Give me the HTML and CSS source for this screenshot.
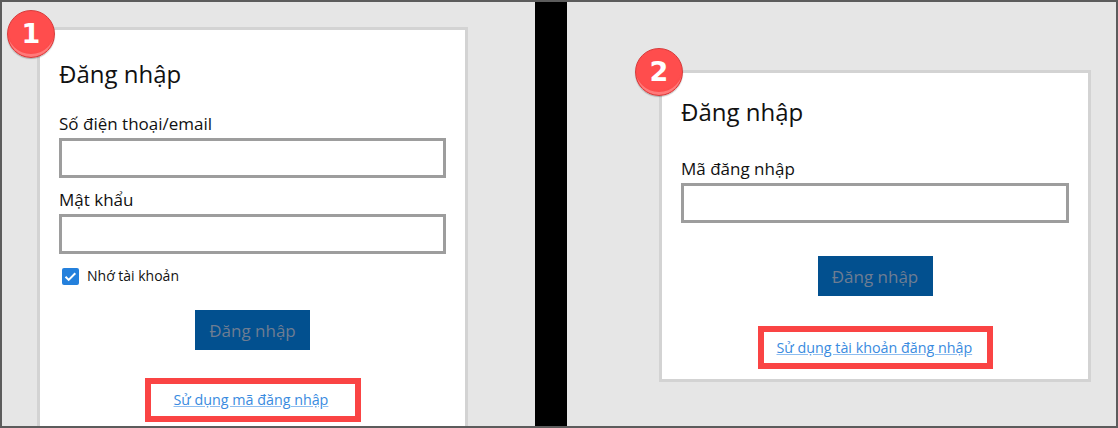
FILE: index.html
```html
<!DOCTYPE html>
<html lang="vi">
<head>
    <meta charset="UTF-8">
    <meta name="viewport" content="width=device-width, initial-scale=1.0">
    <title>Đăng nhập</title>
    <link rel="stylesheet" href="styles.css">
</head>
<body>
    <div class="frame">
        <section class="panel panel-left">
            <div class="card card-one">
                <span class="badge badge-one">1</span>
                <h2 class="title">Đăng nhập</h2>
                <label class="label">Số điện thoại/email</label>
                <input class="field" type="text">
                <label class="label label-next">Mật khẩu</label>
                <input class="field" type="password">
                <div class="remember">
                    <span class="check">
                        <svg width="17" height="17" viewBox="0 0 17 17"><path d="M3.5 8.8l3.2 3.1 6.6-6.6" fill="none" stroke="#fff" stroke-width="2"/></svg>
                    </span>
                    Nhớ tài khoản
                </div>
                <div class="actions"><button class="btn">Đăng nhập</button></div>
                <div class="switch-row"><span class="switch switch-one"><a href="#" class="switch-link">Sử dụng mã đăng nhập</a></span></div>
            </div>
        </section>

        <div class="divider"></div>

        <section class="panel panel-right">
            <div class="card card-two">
                <span class="badge badge-two">2</span>
                <h2 class="title">Đăng nhập</h2>
                <label class="label">Mã đăng nhập</label>
                <input class="field" type="text">
                <div class="actions actions-two"><button class="btn">Đăng nhập</button></div>
                <div class="switch-row"><span class="switch switch-two"><a href="#" class="switch-link">Sử dụng tài khoản đăng nhập</a></span></div>
            </div>
        </section>
    </div>
</body>
</html>
```

FILE: styles.css
```css
body {
    margin: 0;
    font-family: "Open Sans", "Noto Sans", sans-serif;
    color: #111;
}
.frame {
    width: 1118px;
    height: 428px;
    box-sizing: border-box;
    border: 2px solid #5c5c5c;
    background: #e6e6e6;
    display: flex;
    overflow: hidden;
}
.panel {
    display: flex;
    align-items: flex-start;
}
.panel-left {
    width: 533px;
}
.panel-right {
    flex: 1;
}
.divider {
    width: 32px;
    background: #000;
}
.card {
    position: relative;
    box-sizing: border-box;
    background: #fff;
    border: 3px solid #d3d3d3;
    padding: 0 19px;
    display: flex;
    flex-direction: column;
}
.card-one {
    width: 431px;
    height: 420px;
    margin: 25px 0 0 35px;
    padding-top: 29px;
}
.card-two {
    width: 432px;
    height: 312px;
    margin: 68px 0 0 92px;
    padding-top: 24px;
}
.badge {
    position: absolute;
    width: 48px;
    height: 48px;
    box-sizing: border-box;
    border-radius: 50%;
    background: radial-gradient(circle at 50% 40%, #ff4d4d 60%, #f24242 100%);
    border: 1px solid #d83a3a;
    box-shadow: inset 0 -4px 0 -1px #ff7a7a, 0 1px 1px rgba(0,0,0,0.25);
    color: #fff;
    font-family: "DejaVu Sans", sans-serif;
    font-weight: bold;
    font-size: 27px;
    line-height: 46px;
    text-align: center;
}
.badge-one {
    left: -33px;
    top: -20px;
}
.badge-two {
    left: -27px;
    top: -25px;
}
.title {
    margin: 0;
    font-weight: normal;
    font-size: 24px;
    line-height: 30px;
}
.label {
    display: block;
    margin-top: 24px;
    font-size: 17px;
    line-height: 22px;
}
.card-two .label {
    margin-top: 31px;
}
.label-next {
    margin-top: 11px;
}
.field {
    display: block;
    box-sizing: border-box;
    width: 100%;
    height: 40px;
    margin-top: 3px;
    border: 3px solid #9d9d9d;
    background: #fff;
    outline: none;
}
.remember {
    display: flex;
    align-items: center;
    gap: 8px;
    margin-top: 12px;
    padding-left: 3px;
    font-size: 14px;
    line-height: 20px;
}
.check {
    width: 17px;
    height: 17px;
    border-radius: 2px;
    background: #2480dc;
    display: flex;
}
.actions {
    display: flex;
    justify-content: center;
    margin-top: 24px;
}
.actions-two {
    margin-top: 33px;
}
.btn {
    width: 115px;
    height: 40px;
    border: none;
    background: #02508f;
    color: #6e7d92;
    font-family: inherit;
    font-size: 17px;
    padding: 0;
}
.switch-row {
    display: flex;
    justify-content: center;
    margin-top: 28px;
}
.card-two .switch-row {
    margin-top: 30px;
}
.switch {
    display: block;
    box-sizing: border-box;
    border: 6px solid #fa4444;
    height: 44px;
    line-height: 31px;
}
.switch-one {
    width: 216px;
    padding: 0 23px;
}
.switch-two {
    width: 235px;
    height: 43px;
    padding: 0 13px;
}
.switch-link {
    color: #3a8be0;
    font-size: 14.3px;
    text-decoration: underline;
    text-decoration-color: #8dbdf0;
    white-space: nowrap;
}
```
